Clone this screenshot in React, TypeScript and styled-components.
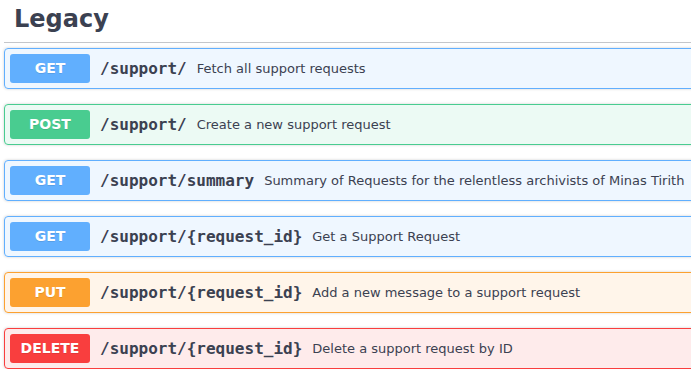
import React from "react";
import styled, { createGlobalStyle } from "styled-components";

type Method = "get" | "post" | "put" | "delete";

const colors: Record<Method, string> = {
  get: "97, 175, 254",
  post: "73, 204, 144",
  put: "252, 161, 48",
  delete: "249, 62, 62",
};

const endpoints: { method: Method; path: string; summary: string }[] = [
  { method: "get", path: "/support/", summary: "Fetch all support requests" },
  { method: "post", path: "/support/", summary: "Create a new support request" },
  {
    method: "get",
    path: "/support/summary",
    summary: "Summary of Requests for the relentless archivists of Minas Tirith",
  },
  { method: "get", path: "/support/{request_id}", summary: "Get a Support Request" },
  {
    method: "put",
    path: "/support/{request_id}",
    summary: "Add a new message to a support request",
  },
  {
    method: "delete",
    path: "/support/{request_id}",
    summary: "Delete a support request by ID",
  },
];

export default function App() {
  return (
    <>
      <GlobalStyle />
      <Section>
        <TagTitle>Legacy</TagTitle>
        <OpList>
          {endpoints.map((ep, i) => (
            <Opblock key={i} $method={ep.method}>
              <Badge $method={ep.method}>{ep.method.toUpperCase()}</Badge>
              <Path>{ep.path}</Path>
              <Summary>{ep.summary}</Summary>
            </Opblock>
          ))}
        </OpList>
      </Section>
    </>
  );
}

const GlobalStyle = createGlobalStyle`
  body {
    margin: 0;
    background: #fff;
    overflow: hidden;
    font-family: "DejaVu Sans", sans-serif;
    color: #3b4151;
  }
`;

const Section = styled.div`
  width: 720px;
  padding: 0 0 0 4px;
`;

const TagTitle = styled.h3`
  margin: 0;
  padding: 3px 0 7px 10px;
  font-size: 24px;
  font-weight: bold;
  line-height: 32px;
  color: #3b4151;
  border-bottom: 1px solid rgba(59, 65, 81, 0.3);
`;

const OpList = styled.div`
  display: flex;
  flex-direction: column;
  gap: 15px;
  padding-top: 5px;
`;

const Opblock = styled.div<{ $method: Method }>`
  display: flex;
  align-items: center;
  padding: 5px;
  border-radius: 4px;
  border: 1px solid rgb(${(p) => colors[p.$method]});
  background: rgba(${(p) => colors[p.$method]}, 0.1);
  box-shadow: 0 0 3px rgba(0, 0, 0, 0.19);
`;

const Badge = styled.span<{ $method: Method }>`
  min-width: 80px;
  padding: 6px 0;
  border-radius: 3px;
  text-align: center;
  font-size: 14px;
  line-height: 17px;
  font-weight: bold;
  color: #fff;
  background: rgb(${(p) => colors[p.$method]});
  text-shadow: 0 1px 0 rgba(0, 0, 0, 0.1);
`;

const Path = styled.span`
  padding: 0 10px;
  font-family: "DejaVu Sans Mono", monospace;
  font-size: 16px;
  font-weight: bold;
  color: #3b4151;
`;

const Summary = styled.span`
  font-size: 13px;
  color: #3b4151;
  white-space: nowrap;
`;
